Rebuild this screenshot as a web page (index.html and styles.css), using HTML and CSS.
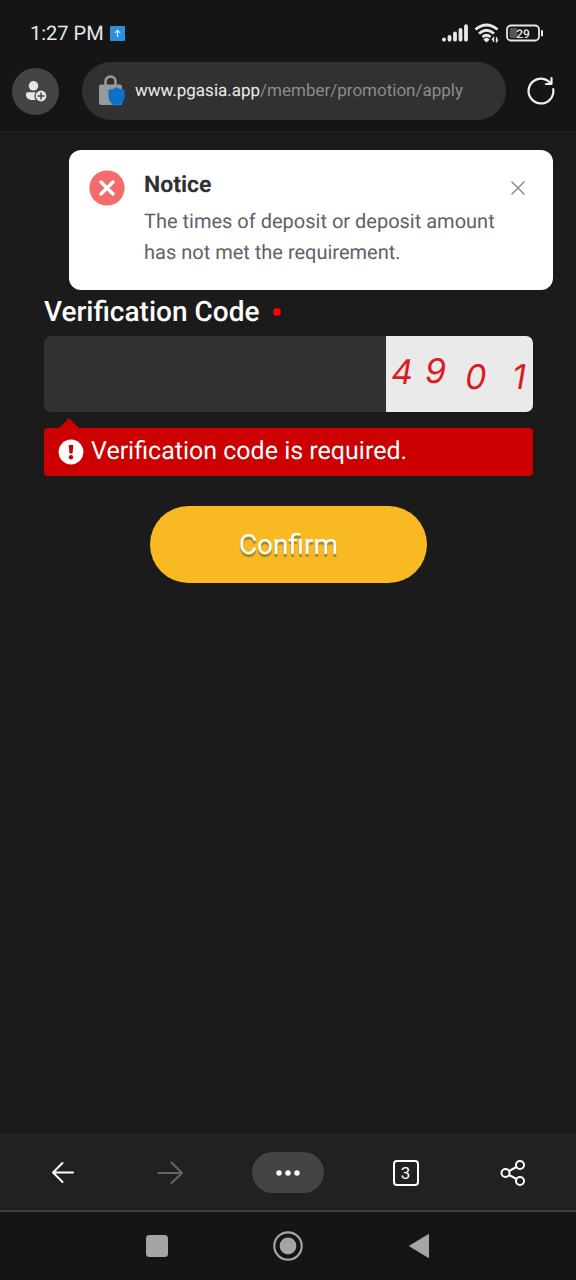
FILE: index.html
```html
<!DOCTYPE html>
<html lang="en">
<head>
<meta charset="utf-8">
<meta name="viewport" content="width=device-width, initial-scale=1">
<title>Apply for promotion</title>
<link rel="stylesheet" href="styles.css">
</head>
<body>
<header class="browser-top">
  <div class="status-bar">
    <span class="clock">1:27 PM</span>
    <svg class="upload-badge" width="15" height="15" viewBox="0 0 15 15" aria-hidden="true"><rect width="15" height="15" rx="1" fill="#2b91dc"/><path d="M7.500 11V4.500M5 6.800l2.500-2.500 2.500 2.500" fill="none" stroke="#d9f1ff" stroke-width="1.200"/></svg>
    <span class="status-icons">
      <svg width="26" height="18" viewBox="0 0 26 18" stroke="#e8e8e8" stroke-width="3.800" stroke-linecap="round" aria-hidden="true"><path d="M2 15.500v.2M7.500 13v2.700M13 9.500v6.200M18.500 6v9.700M24 2.200v13.500"/></svg>
      <svg width="26" height="20" viewBox="0 0 26 20" fill="none" stroke="#e8e8e8" stroke-width="2.800" aria-hidden="true"><path d="M1.500 6.500Q12.500-2.500 23.500 6.500M5 10.500Q12.500 4 20 10.500M8.500 14Q12.500 10.500 16.500 14"/><path d="M12.500 14.300l3.200 2.300-3.200 3-3.200-3z" fill="#e8e8e8" stroke="none"/><path d="M19.500 19v-4l-1.500 2M22.500 14v4.500l1.500-2" stroke-width="1.300"/></svg>
      <svg width="38" height="18" viewBox="0 0 38 18" aria-hidden="true"><rect x="1" y="1.500" width="32" height="15" rx="4" fill="none" stroke="#e8e8e8" stroke-width="1.800"/><rect x="3.500" y="4" width="8" height="10" rx="2" fill="#555"/><path d="M36 7v4.500" stroke="#e8e8e8" stroke-width="2" stroke-linecap="round"/><text x="17" y="13.500" text-anchor="middle" class="battery-text">29</text></svg>
    </span>
  </div>
  <div class="address-row">
    <button class="profile-button" type="button" aria-label="Profile"><svg width="22" height="22" viewBox="0 0 22 22" aria-hidden="true"><circle cx="8.500" cy="5.800" r="4.800" fill="#e6e6e6"/><path d="M2.500 12.300h13v7.700H8C3.800 20 1 18 1 15v-1.200q0-1.500 1.500-1.500z" fill="#e6e6e6"/><circle cx="16" cy="16" r="6.600" fill="#444"/><circle cx="16" cy="16" r="5.400" fill="#e6e6e6"/><path d="M16 12.600v6.800M12.600 16h6.800" stroke="#444" stroke-width="1.400"/></svg></button>
    <a class="address" href="#">
      <svg width="28" height="34" viewBox="0 0 28 34" aria-hidden="true"><path d="M7.500 12V7.500a5 5 0 0 1 10 0V12" fill="none" stroke="#999" stroke-width="2.600"/><rect x="1" y="10.500" width="23" height="20.500" rx="2" fill="#999"/><path d="M18.500 13c2.500 2 5 2.600 8 2.600v6.800c0 5-3.500 8.300-8 9.600-4.500-1.300-8-4.600-8-9.600v-6.800c3 0 5.500-.6 8-2.600z" fill="#0b72cc"/></svg>
      <span class="url">www.pgasia.app<span class="url-path">/member/promotion/apply</span></span>
    </a>
    <button class="icon-button" type="button" aria-label="Reload"><svg width="30" height="30" viewBox="0 0 30 30" fill="none" stroke="#f0f0f0" stroke-width="2.200" stroke-linecap="round" stroke-linejoin="round" aria-hidden="true"><path d="M27.200 13A12.400 12.400 0 1 1 21.500 4.500L25 7.500M25.500 2v6h-5.500"/></svg></button>
  </div>
</header>

<main class="page">
  <section class="notice" role="alert">
    <svg class="notice-icon" width="36" height="36" viewBox="0 0 36 36" aria-hidden="true"><circle cx="18" cy="18" r="17.600" fill="#f46b6c"/><path d="M12 12l12 12M24 12L12 24" stroke="#fff" stroke-width="3.400" stroke-linecap="round"/></svg>
    <div class="notice-body">
      <h2 class="notice-title">Notice</h2>
      <p class="notice-text">The times of deposit or deposit amount has not met the requirement.</p>
    </div>
    <button class="notice-close" type="button" aria-label="Close"><svg width="16" height="16" viewBox="0 0 16 16" aria-hidden="true"><path d="M1.500 1.500l13 13M14.500 1.500l-13 13" stroke="#909090" stroke-width="1.500"/></svg></button>
  </section>

  <form class="form">
    <label class="field-label" for="code">Verification Code <span class="required-dot"></span></label>
    <div class="code-row">
      <input class="code-input" id="code" type="text" aria-describedby="code-error">
      <svg class="captcha" viewBox="0 0 147 76" role="img" aria-label="Verification digits">
        <text x="5" y="48">4</text><text x="39" y="47">9</text><text x="79" y="53">0</text><text x="126" y="53">1</text>
      </svg>
    </div>
    <div class="error" id="code-error">
      <svg width="26" height="26" viewBox="0 0 26 26" aria-hidden="true"><circle cx="13" cy="13" r="12.400" fill="#fff"/><path d="M10.700 6h4.600l-.8 8.500h-3z" fill="#c00"/><circle cx="13" cy="18.200" r="2.200" fill="#c00"/></svg>
      <span>Verification code is required.</span>
    </div>
    <button class="confirm" type="button">Confirm</button>
  </form>
</main>

<nav class="browser-bar" aria-label="Browser">
  <button class="icon-button" type="button" aria-label="Back"><svg width="24" height="24" viewBox="0 0 24 24" fill="none" stroke="#fff" stroke-width="2" stroke-linecap="round" stroke-linejoin="round" aria-hidden="true"><path d="M22 11.500H2M11.500 2L2 11.500l9.500 9.500"/></svg></button>
  <button class="icon-button" type="button" aria-label="Forward"><svg width="26" height="24" viewBox="0 0 26 24" fill="none" stroke="#666" stroke-width="2" stroke-linecap="round" stroke-linejoin="round" aria-hidden="true"><path d="M1.500 12h23M14.500 1.500L25 12 14.500 22"/></svg></button>
  <button class="menu-button" type="button" aria-label="Menu"><svg width="26" height="6" viewBox="0 0 26 6" fill="#fff" aria-hidden="true"><circle cx="4" cy="3" r="2.700"/><circle cx="13" cy="3" r="2.700"/><circle cx="22" cy="3" r="2.700"/></svg></button>
  <button class="icon-button" type="button" aria-label="Tabs"><span class="tab-count">3</span></button>
  <button class="icon-button" type="button" aria-label="Share"><svg width="26" height="28" viewBox="0 0 26 28" fill="none" stroke="#fff" stroke-width="2" aria-hidden="true"><circle cx="5.500" cy="14" r="4"/><circle cx="20" cy="6" r="4"/><circle cx="20" cy="22" r="4"/><path d="M9 12l7.500-4M9 16l7.500 4"/></svg></button>
</nav>
<nav class="system-bar" aria-label="System">
  <button class="icon-button" type="button" aria-label="Recent apps"><svg width="22" height="22" viewBox="0 0 22 22" aria-hidden="true"><rect x="0" y="0" width="22" height="22" rx="3.500" fill="#a5a5a5"/></svg></button>
  <button class="icon-button" type="button" aria-label="Home"><svg width="30" height="30" viewBox="0 0 30 30" aria-hidden="true"><circle cx="15" cy="15" r="13.700" fill="none" stroke="#a5a5a5" stroke-width="2.200"/><circle cx="15" cy="15" r="8.400" fill="#a5a5a5"/></svg></button>
  <button class="icon-button" type="button" aria-label="Back"><svg width="22" height="26" viewBox="0 0 22 26" aria-hidden="true"><path d="M20.500 1.500v23L1.500 13z" fill="#a5a5a5" stroke="#a5a5a5" stroke-linejoin="round"/></svg></button>
</nav>
</body>
</html>
```
FILE: styles.css
```css
* {
  box-sizing: border-box;
}

body {
  margin: 0;
  min-height: 100vh;
  display: flex;
  flex-direction: column;
  background: #1b1b1b;
  color: #fff;
  font-family: Roboto, "Liberation Sans", sans-serif;
  text-rendering: geometricPrecision;
}

svg {
  display: block;
  flex: none;
}

button {
  border: 0;
  padding: 0;
  background: none;
  color: inherit;
  font: inherit;
}

.browser-top {
  background: #151515;
  padding-bottom: 11px;
  border-bottom: 1px solid #202020;
}

.status-bar {
  display: flex;
  align-items: center;
  gap: 6px;
  padding: 20px 32px 16px 30px;
  line-height: 26px;
}

.clock {
  font-size: 20px;
  color: #e8e8e8;
}

.status-icons {
  display: flex;
  align-items: center;
  gap: 6px;
  margin-left: auto;
}

.battery-text {
  font-size: 12px;
  font-weight: 500;
  fill: #e8e8e8;
}

.address-row {
  display: flex;
  align-items: center;
  padding: 0 20px 0 12px;
}

.profile-button {
  display: grid;
  place-items: center;
  width: 47px;
  height: 47px;
  border-radius: 50%;
  background: #444;
}

.address {
  flex: 1;
  display: flex;
  align-items: center;
  gap: 9px;
  height: 58px;
  margin: 0 20px 0 23px;
  padding-left: 16px;
  border-radius: 29px;
  background: #313131;
  color: #ececec;
  font-size: 17px;
  text-decoration: none;
}

.url-path {
  color: #8c8c8c;
}

.icon-button {
  display: grid;
  place-items: center;
}

.page {
  flex: 1;
  position: relative;
  padding: 163px 43px 24px 44px;
}

.notice {
  position: absolute;
  top: 18px;
  left: 69px;
  right: 23px;
  display: flex;
  align-items: flex-start;
  padding: 20px 27px 22px 20px;
  border-radius: 12px;
  background: #fff;
}

.notice-body {
  flex: 1;
  margin: 0 -8px 0 19px;
}

.notice-title {
  margin: 0;
  color: #303133;
  font-size: 23px;
  font-weight: 700;
  line-height: 29px;
}

.notice-text {
  margin: 7px 0 0;
  color: #606266;
  font-size: 20px;
  line-height: 31px;
}

.notice-close {
  padding-top: 10px;
}

.form {
  display: flex;
  flex-direction: column;
}

.field-label {
  display: flex;
  align-items: center;
  gap: 14px;
  font-size: 28px;
  font-weight: 500;
  line-height: 34px;
}

.required-dot {
  width: 8px;
  height: 8px;
  border-radius: 50%;
  background: #f00505;
}

.code-row {
  display: flex;
  height: 76px;
  margin-top: 7px;
  border-radius: 7px;
  overflow: hidden;
}

.code-input {
  flex: 1;
  min-width: 0;
  padding: 0 20px;
  border: 0;
  background: #313131;
  color: #fff;
  font: inherit;
  font-size: 24px;
}

.captcha {
  width: 147px;
  height: 76px;
  background: #eaeaea;
  fill: #dc1c22;
  font-family: Inter, "Open Sans", sans-serif;
  font-size: 34px;
  font-style: italic;
}

.error {
  position: relative;
  display: flex;
  align-items: center;
  gap: 7px;
  margin-top: 16px;
  padding: 0 14px;
  border-radius: 4px;
  background: #c00;
  font-size: 25px;
  line-height: 48px;
}

.error::before {
  content: "";
  position: absolute;
  left: 15px;
  bottom: 100%;
  border: 10px solid transparent;
  border-top-width: 0;
  border-bottom-color: #c00;
}

.confirm {
  align-self: center;
  width: 277px;
  margin-top: 30px;
  border-radius: 39px;
  background: #f8b923;
  font-size: 28px;
  line-height: 77px;
  text-shadow: 0 3px 1px #9a8435;
}

.browser-bar {
  display: grid;
  grid-template-columns: 5fr 5fr 6fr 5fr 5fr;
  align-items: center;
  justify-items: center;
  height: 78px;
  padding: 0 10px;
  border-top: 1px solid #292929;
  border-bottom: 2px solid #3e3e3e;
  background: #212121;
}

.menu-button {
  display: grid;
  place-items: center;
  width: 72px;
  height: 41px;
  border-radius: 21px;
  background: #444;
}

.tab-count {
  width: 26px;
  height: 26px;
  border: 2px solid #fff;
  border-radius: 4px;
  font-size: 17px;
  line-height: 22px;
}

.system-bar {
  display: flex;
  align-items: center;
  justify-content: center;
  gap: 105px;
  height: 68px;
  background: #151515;
}
```
